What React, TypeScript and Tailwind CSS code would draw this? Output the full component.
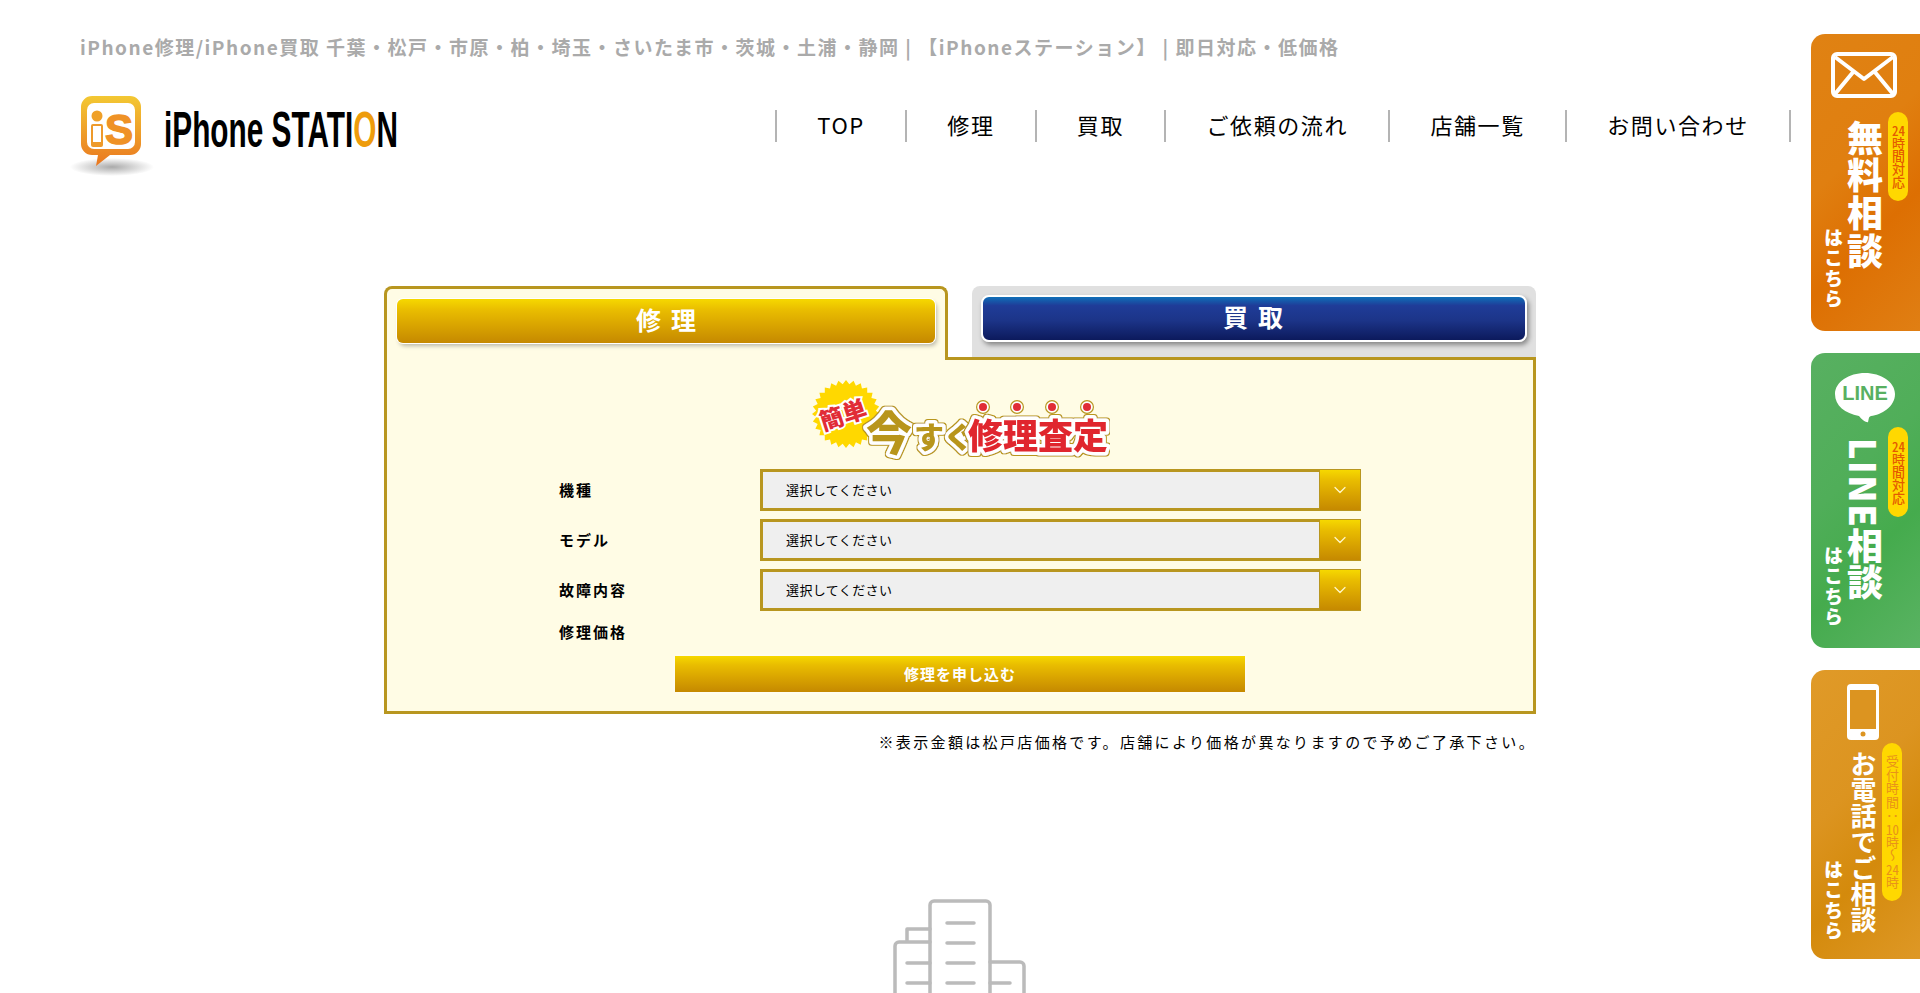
import { ChevronDown } from 'lucide-react';

const FONT = "font-['Noto_Sans_CJK_JP','Noto_Sans',sans-serif]";
const GOLD = 'bg-[linear-gradient(to_bottom,#f6d800,#e9bd00_25%,#d9a400_60%,#c58900)]';

const NAV = ['TOP', '修理', '買取', 'ご依頼の流れ', '店舗一覧', 'お問い合わせ'];

function Logo() {
  return (
    <svg width="330" height="82" viewBox="0 0 330 82" className="shrink-0 overflow-visible">
      <defs>
        <linearGradient id="logoGrad" x1="0" y1="0" x2="0" y2="1">
          <stop offset="0" stopColor="#f3c833" />
          <stop offset="1" stopColor="#ea7720" />
        </linearGradient>
        <radialGradient id="logoShadow">
          <stop offset="0" stopColor="#aaa" />
          <stop offset="1" stopColor="#fff" />
        </radialGradient>
      </defs>
      <ellipse cx="32" cy="71" rx="42" ry="9" fill="url(#logoShadow)" />
      <path d="M12 0h38a11 11 0 0 1 11 11v37a11 11 0 0 1-11 11H30L16 70l2-11h-6A11 11 0 0 1 1 48V11A11 11 0 0 1 12 0z" fill="url(#logoGrad)" />
      <rect x="7" y="7" width="48" height="46" rx="7" fill="#fff" />
      <circle cx="17" cy="20" r="5.5" fill="#efa028" />
      <rect x="11" y="28" width="12" height="23" rx="2" fill="#ee9a2a" />
      <rect x="13" y="30" width="8" height="16" fill="#fff" />
      <text x="39" y="48" textAnchor="middle" fontFamily="Liberation Sans" fontWeight="700" fontSize="42" fill="#ef9226" stroke="#ef9226" strokeWidth="1.5">S</text>
      <text transform="translate(84 51) scale(0.596 1)" fontFamily="Liberation Sans" fontWeight="700" fontSize="50" fill="#000">
        iPhone STATI<tspan fill="#ee9c0c">O</tspan>N
      </text>
    </svg>
  );
}

function Burst() {
  const pts: string[] = [];
  for (let i = 0; i < 56; i++) {
    const r = i % 2 ? 30 : 34;
    const a = (i / 56) * Math.PI * 2;
    pts.push(`${36 + r * Math.cos(a)},${38 + r * Math.sin(a)}`);
  }
  return <polygon points={pts.join(' ')} fill="#ffd800" />;
}

function Outlined({ x, y, size, fill, children }: { x: number; y: number; size: number; fill: string; children: string }) {
  return (
    <text x={x} y={y} fontSize={size} fontWeight={900} fill={fill} stroke="#fff" strokeWidth={7} strokeLinejoin="round" paintOrder="stroke" filter="url(#goldEdge)">
      {children}
    </text>
  );
}

function Heading() {
  return (
    <svg width="300" height="88" viewBox="0 0 300 88" className={`mx-auto ${FONT}`}>
      <defs>
        <filter id="goldEdge" x="-20%" y="-30%" width="140%" height="160%">
          <feMorphology in="SourceAlpha" operator="dilate" radius="1.4" result="grown" />
          <feFlood floodColor="#b8961f" />
          <feComposite in2="grown" operator="in" result="edge" />
          <feMerge>
            <feMergeNode in="edge" />
            <feMergeNode in="SourceGraphic" />
          </feMerge>
        </filter>
      </defs>
      <Burst />
      {[173, 207, 242, 277].map((cx) => (
        <g key={cx}>
          <circle cx={cx} cy="31" r="7" fill="#b8961f" />
          <circle cx={cx} cy="31" r="5.8" fill="#fff" />
          <circle cx={cx} cy="31" r="4" fill="#e12c36" />
        </g>
      ))}
      <text x="13" y="55" fontSize="24" fontWeight="900" fill="#e12c36" stroke="#fff" strokeWidth="4" paintOrder="stroke" transform="rotate(-18 13 55)">簡単</text>
      <Outlined x={56} y={74} size={46} fill="#b8951c">今</Outlined>
      <Outlined x={104} y={72} size={30} fill="#b8951c">すぐ</Outlined>
      <Outlined x={158} y={73} size={35} fill="#e0282e">修理査定</Outlined>
    </svg>
  );
}

function SelectRow({ label }: { label: string }) {
  return (
    <div className="flex items-center">
      <span className="w-[201px] text-[15px] font-bold tracking-[2px] text-black">{label}</span>
      <div className="flex h-[42px] flex-1">
        <div className="flex flex-1 items-center border-[3px] border-r-0 border-[#b8961f] bg-[#efefef] pl-[23px] text-[13px] tracking-[0.4px] text-black">
          選択してください
        </div>
        <div className={`flex w-[42px] items-center justify-center border border-[#b8961f] ${GOLD}`}>
          <ChevronDown size={20} strokeWidth={1.5} className="text-[#fff7c8]" />
        </div>
      </div>
    </div>
  );
}

function Pill({ className, children }: { className: string; children: React.ReactNode }) {
  return (
    <span className={`flex items-center justify-center rounded-full bg-[#ffd800] text-[13px] font-medium leading-[20px] [writing-mode:vertical-rl] ${className}`}>
      <span>{children}</span>
    </span>
  );
}

function Upright({ children }: { children: string }) {
  return <span className="[text-combine-upright:all]">{children}</span>;
}

function SideTabs() {
  return (
    <div className="absolute right-0 top-[34px] flex w-[109px] flex-col gap-[22px] font-bold text-white">
      <a className="flex h-[297px] flex-col rounded-l-[14px] bg-[linear-gradient(135deg,#e08213,#e07f10_40%,#dd6f02_65%,#e07f14)] pl-[13px]">
        <svg width="70" height="48" viewBox="0 0 70 48" fill="none" stroke="#fff" strokeWidth="4" strokeLinejoin="round" className="ml-[6px] mt-[17px] shrink-0">
          <rect x="3" y="3" width="62" height="42" rx="4" />
          <path d="M5 6l29 22L63 6M5 43l19-23M63 43L44 20" />
        </svg>
        <div className="mt-[13px] flex items-start">
          <span className="mt-[116px] text-[19px] font-black leading-[19px] tracking-[1.5px] [writing-mode:vertical-rl]">はこちら</span>
          <span className="ml-[4px] mt-[8px] text-[36px] font-black leading-[36px] tracking-[1.8px] [writing-mode:vertical-rl]">無料相談</span>
          <Pill className="ml-[5px] h-[89px] w-[20px] text-[#e45a00]"><Upright>24</Upright>時間対応</Pill>
        </div>
      </a>
      <a className="flex h-[295px] flex-col rounded-l-[14px] bg-[linear-gradient(135deg,#58b061,#50ae59_40%,#45ab4d_65%,#5ab363)] pl-[13px]">
        <svg width="62" height="52" viewBox="0 0 62 52" className="ml-[10px] mt-[19px] shrink-0">
          <path d="M31 1c16 0 30 9 30 21 0 13-14 21-24 22-3 1-2 4-3 6-1 1-6-2-9-6C11 41 1 34 1 22 1 10 15 1 31 1z" fill="#fff" />
          <text x="31" y="28" textAnchor="middle" fontFamily="Liberation Sans" fontWeight="700" fontSize="20" fill="#58b061">LINE</text>
        </svg>
        <div className="mt-[3px] flex items-start">
          <span className="mt-[119px] text-[19px] font-black leading-[19px] tracking-[1.5px] [writing-mode:vertical-rl]">はこちら</span>
          <span className="ml-[4px] mt-[11px] text-[36px] font-black leading-[36px] [writing-mode:vertical-rl]">
            <span className="tracking-[1.5px]">LINE</span>相談
          </span>
          <Pill className="ml-[5px] h-[90px] w-[20px] text-[#e45a00]"><Upright>24</Upright>時間対応</Pill>
        </div>
      </a>
      <a className="flex h-[289px] flex-col rounded-l-[14px] bg-[linear-gradient(135deg,#e09a28,#dc9420_40%,#d48a0c_65%,#de9826)] pl-[13px]">
        <svg width="34" height="56" viewBox="0 0 34 56" className="ml-[22px] mt-[14px] shrink-0">
          <rect x="1" y="0" width="32" height="56" rx="4" fill="#fff" />
          <rect x="4" y="6" width="26" height="39" fill="#dc9420" />
          <circle cx="17" cy="50" r="2.5" fill="#dc9420" />
        </svg>
        <div className="mt-[3px] flex items-start">
          <span className="mt-[117px] text-[19px] font-black leading-[19px] tracking-[1.5px] [writing-mode:vertical-rl]">はこちら</span>
          <span className="ml-[7px] mt-[8px] text-[26px] font-bold leading-[26px] [writing-mode:vertical-rl]">お電話でご相談</span>
          <Pill className="ml-[6px] h-[158px] w-[20px] font-normal tracking-[0.5px] text-[#e8921a]">受付時間：<Upright>10</Upright>時～<Upright>24</Upright>時</Pill>
        </div>
      </a>
    </div>
  );
}

function BuildingIcon() {
  return (
    <svg width="136" height="120" viewBox="0 0 136 120" fill="none" stroke="#bbb" strokeWidth="3.5" strokeLinecap="round" strokeLinejoin="round" className="mx-auto mt-[146px] shrink-0">
      <path d="M38 120V6a4 4 0 0 1 4-4h52a4 4 0 0 1 4 4v114" />
      <path d="M3 120V47a4 4 0 0 1 4-4h31M15 43V30h23M98 63h30a4 4 0 0 1 4 4v53" />
      <path d="M55 24h27M55 44h27M55 64h27M55 84h27M55 104h27M15 64h23M15 84h23M15 104h23M98 84h20M98 104h20" />
    </svg>
  );
}

export default function App() {
  return (
    <div className={`relative h-[993px] w-full overflow-hidden bg-white ${FONT}`}>
      <SideTabs />
      <header className="pl-[80px] pr-[129px] pt-[33px]">
        <p className="whitespace-nowrap text-[19px] font-bold leading-[28px] tracking-[1.5px] text-[#aaa]">
          iPhone修理/iPhone買取 千葉・松戸・市原・柏・埼玉・さいたま市・茨城・土浦・静岡 | 【iPhoneステーション】 | 即日対応・低価格
        </p>
        <div className="mt-[35px] flex items-start justify-between">
          <Logo />
          <nav className="mt-[14px] flex border-r-2 border-[#b4b4b4]">
            {NAV.map((item) => (
              <a key={item} className="flex h-[32px] items-center border-l-2 border-[#b4b4b4] px-[40.2px] pb-[4px] text-[22px] leading-none tracking-[1.6px] text-black">
                {item}
              </a>
            ))}
          </nav>
        </div>
      </header>

      <main className="mx-auto mt-[108px] w-[1152px]">
        <div className="flex h-[71px] gap-[24px]">
          <div className="relative z-10 h-[74px] w-[564px] rounded-t-[8px] border-[3px] border-b-0 border-[#b8961f] bg-[#fffce5] px-[10px] pt-[10px]">
            <div className={`flex h-[44px] items-center justify-center rounded-[6px] pb-[2px] pl-[10px] text-[25px] font-bold tracking-[10px] text-white shadow-[0_0_0_1px_#fff,2px_3px_4px_#0004] ${GOLD}`}>
              修理
            </div>
          </div>
          <div className="w-[564px] rounded-t-[8px] bg-[#e0e0e0] px-[9px] pt-[9px]">
            <div className="flex h-[47px] items-center justify-center rounded-[8px] border-2 border-white bg-[linear-gradient(to_bottom,#0f6fb8,#1f3c98_20%,#1c3488_55%,#0c1a5c)] pb-[4px] pl-[8px] text-[25px] font-bold tracking-[10px] text-white shadow-[2px_3px_5px_#0006]">
              買取
            </div>
          </div>
        </div>
        <div className="flex h-[357px] flex-col border-[3px] border-[#b8961f] bg-[#fffce5]">
          <div className="mt-[16px]">
            <Heading />
          </div>
          <div className="mx-auto mt-[5px] flex w-[802px] flex-col gap-[8px]">
            <SelectRow label="機種" />
            <SelectRow label="モデル" />
            <SelectRow label="故障内容" />
          </div>
          <div className="mx-auto mt-[10px] w-[802px] text-[15px] font-bold leading-[22px] tracking-[2px] text-black">修理価格</div>
          <div className={`mx-auto mt-[13px] flex h-[36px] w-[570px] items-center justify-center text-[15px] font-bold tracking-[1px] text-white shadow-[0_0_5px_#fff] ${GOLD}`}>
            修理を申し込む
          </div>
        </div>
        <p className="mt-[17px] text-right text-[15px] leading-[22px] tracking-[2.35px] text-black">
          ※表示金額は松戸店価格です。店舗により価格が異なりますので予めご了承下さい。
        </p>
      </main>

      <BuildingIcon />
    </div>
  );
}
